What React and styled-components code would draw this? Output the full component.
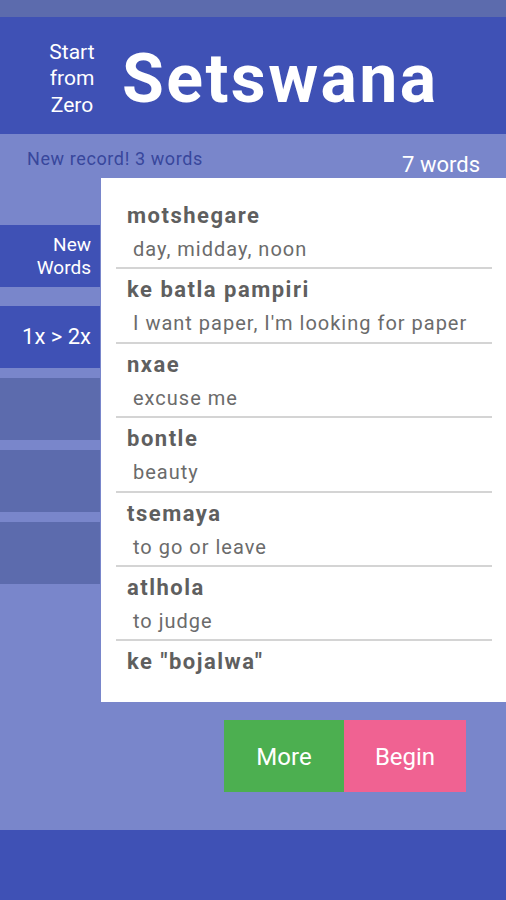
import React from "react";
import styled, { createGlobalStyle } from "styled-components";

const GlobalStyle = createGlobalStyle`
  html, body { margin: 0; padding: 0; }
  body { font-family: Roboto, "Noto Sans", "Liberation Sans", sans-serif; }
`;

const Screen = styled.div`
  width: 506px;
  height: 900px;
  display: flex;
  flex-direction: column;
  background: #7986cb;
  overflow: hidden;
`;

const StatusBar = styled.div`
  height: 17px;
  background: #5c6bad;
  flex-shrink: 0;
`;

const Header = styled.header`
  height: 117px;
  flex-shrink: 0;
  background: #3f51b5;
  display: flex;
  align-items: center;
  padding: 6px 0 0 48px;
  box-sizing: border-box;
  gap: 26px;
  color: #fff;
`;

const Tagline = styled.div`
  width: 48px;
  text-align: center;
  font-size: 21px;
  line-height: 26.5px;
`;

const Title = styled.h1`
  margin: 0;
  font-size: 68px;
  line-height: 68px;
  font-weight: 700;
  letter-spacing: 2.4px;
`;

const InfoRow = styled.div`
  height: 44px;
  flex-shrink: 0;
  display: flex;
  justify-content: space-between;
  align-items: flex-start;
  padding: 0 26px 0 27px;
  box-sizing: border-box;
`;

const Record = styled.div`
  padding-top: 14px;
  font-size: 18px;
  line-height: 21px;
  letter-spacing: 0.6px;
  color: #38479c;
`;

const Count = styled.div`
  padding-top: 18px;
  font-size: 22px;
  line-height: 26px;
  color: #fff;
`;

const Body = styled.div`
  height: 524px;
  flex-shrink: 0;
  display: flex;
`;

const SideMenu = styled.nav`
  width: 101px;
  flex-shrink: 0;
  padding-top: 47px;
  box-sizing: border-box;
  display: flex;
  flex-direction: column;
`;

const SideItem = styled.div`
  height: 62px;
  width: 100px;
  margin-top: ${(p) => p.$gap}px;
  background: ${(p) => (p.$active ? "#3f51b5" : "#5c6bad")};
  color: #fff;
  display: flex;
  align-items: center;
  justify-content: flex-end;
  text-align: right;
  padding-right: 9px;
  box-sizing: border-box;
  font-size: ${(p) => p.$size}px;
  line-height: ${(p) => p.$lh}px;
`;

const Card = styled.section`
  flex: 1;
  background: #fff;
  padding-top: 17px;
  box-sizing: border-box;
  overflow: hidden;
`;

const Entry = styled.div`
  margin: 0 14px 0 15px;
  padding: 3px 0 2px 11px;
  border-bottom: 2px solid ${(p) => (p.$last ? "transparent" : "#d4d4d4")};
`;

const Word = styled.div`
  font-size: 22px;
  line-height: 36px;
  font-weight: 700;
  letter-spacing: 1.5px;
  color: #5f5f5f;
  white-space: nowrap;
`;

const Meaning = styled.div`
  padding-left: 6px;
  font-size: 20px;
  line-height: 31.4px;
  letter-spacing: 1px;
  color: #6b6b6b;
  white-space: nowrap;
`;

const Actions = styled.div`
  display: flex;
  justify-content: flex-end;
  padding: 18px 40px 0 0;
`;

const ActionButton = styled.button`
  width: ${(p) => p.$w}px;
  height: 72px;
  border: none;
  margin: 0;
  background: ${(p) => p.$bg};
  color: #fff;
  font-family: Roboto, "Noto Sans", sans-serif;
  font-size: 24px;
  padding: 2px 0 0;
  cursor: pointer;
`;

const Spacer = styled.div`
  flex: 1;
`;

const NavBar = styled.div`
  height: 70px;
  flex-shrink: 0;
  background: #3f51b5;
`;

const words = [
  ["motshegare", "day, midday, noon"],
  ["ke batla pampiri", "I want paper, I'm looking for paper"],
  ["nxae", "excuse me"],
  ["bontle", "beauty"],
  ["tsemaya", "to go or leave"],
  ["atlhola", "to judge"],
  ['ke "bojalwa"', null],
];

export default function App() {
  return (
    <>
      <GlobalStyle />
      <Screen>
        <StatusBar />
        <Header>
          <Tagline>Start from Zero</Tagline>
          <Title>Setswana</Title>
        </Header>
        <InfoRow>
          <Record>New record! 3 words</Record>
          <Count>7 words</Count>
        </InfoRow>
        <Body>
          <SideMenu>
            <SideItem $active $gap={0} $size={19} $lh={23}>
              New
              <br />
              Words
            </SideItem>
            <SideItem $active $gap={19} $size={22} $lh={24}>
              1x &gt; 2x
            </SideItem>
            <SideItem $gap={10} />
            <SideItem $gap={10} />
            <SideItem $gap={10} />
          </SideMenu>
          <Card>
            {words.map(([w, m], i) => (
              <Entry key={w} $last={i === words.length - 1}>
                <Word>{w}</Word>
                {m && <Meaning>{m}</Meaning>}
              </Entry>
            ))}
          </Card>
        </Body>
        <Actions>
          <ActionButton $w={120} $bg="#4caf50">More</ActionButton>
          <ActionButton $w={122} $bg="#f06292">Begin</ActionButton>
        </Actions>
        <Spacer />
        <NavBar />
      </Screen>
    </>
  );
}
